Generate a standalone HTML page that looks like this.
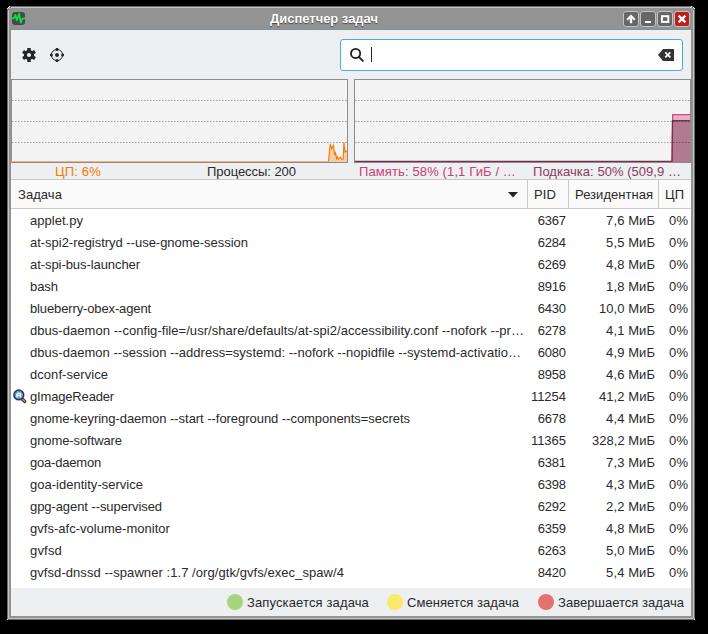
<!DOCTYPE html><html><head><meta charset="utf-8">
<style>
*{margin:0;padding:0;box-sizing:border-box}
html,body{width:708px;height:634px;background:#000;overflow:hidden;font-family:"Liberation Sans",sans-serif;font-size:13px;color:#2a2a2a}
.abs{position:absolute}
#frame{position:absolute;left:7px;top:6px;width:688px;height:614px;background:#939393;border:1px solid #6a6a6a;border-radius:4px 4px 0 0}
#frame .hl{position:absolute;left:0;top:0;right:0;bottom:0;border:1px solid #c6c6c6;border-radius:3px 3px 0 0}
#title{position:absolute;left:270px;top:8px;height:21px;white-space:nowrap;color:#fff;font-weight:bold;font-size:13px;line-height:21px;text-shadow:0 1px 1px #444}
#blue{position:absolute;left:11px;top:29px;width:680px;height:1px;background:#7895a6}
#content{position:absolute;left:11px;top:30px;width:680px;height:586px;background:#eeeff1;overflow:hidden}
.tb{position:absolute;top:11px;width:16px;height:16px;background:#666;border:1px solid #c3c3c3;border-radius:3px}
.tb.close{background:#bf1b1b}
#search{position:absolute;left:329px;top:9px;width:343px;height:32px;background:#fff;border:1px solid #4aa9e6;border-radius:3px}
.graph{position:absolute;top:49px;height:84px;background:#f4f4f4;border:1px solid #8c8c8c}
.lbl{position:absolute;top:134px;height:16px;line-height:16px;white-space:nowrap}
#header{position:absolute;left:0;top:149px;width:680px;height:30px;background:#fafafa;border-top:1px solid #c9c9c9;border-bottom:1px solid #c9c9c9}
.hc{position:absolute;top:1px;height:28px;line-height:28px;white-space:nowrap}
.vd{position:absolute;top:0;width:1px;height:28px;background:#c9c9c9}
#list{position:absolute;left:0;top:179px;width:680px;height:379px;background:#fff;overflow:hidden}
.row{position:absolute;left:0;width:680px;height:22px;line-height:22px;white-space:nowrap}
.row span{position:absolute;top:1px}
.n{left:19px}
.p{right:125px;text-align:right}
.r{right:36px;text-align:right}
.c{right:3px;text-align:right}
#status{position:absolute;left:0;top:558px;width:680px;height:28px}
.dot{position:absolute;top:15px;width:16px;height:16px;border-radius:50%}
.st{position:absolute;top:565px;line-height:16px;white-space:nowrap}
</style></head><body>
<div id="frame"><div class="hl"></div></div><div class="abs" style="left:7px;top:619px;width:1px;height:1px;background:#e0e0e0"></div><div class="abs" style="left:694px;top:619px;width:1px;height:1px;background:#e0e0e0"></div><div class="abs" style="left:9px;top:6px;width:1px;height:1px;background:#f0f0f0"></div><div class="abs" style="left:8px;top:7px;width:1px;height:1px;background:#f0f0f0"></div><div class="abs" style="left:7px;top:8px;width:1px;height:1px;background:#e8e8e8"></div><div class="abs" style="left:10px;top:7px;width:1px;height:1px;background:#6e6e6e"></div><div class="abs" style="left:8px;top:9px;width:1px;height:1px;background:#6e6e6e"></div><div class="abs" style="left:9px;top:7px;width:1px;height:1px;background:#a0a0a0"></div><div class="abs" style="left:8px;top:8px;width:1px;height:1px;background:#a0a0a0"></div><div class="abs" style="left:691px;top:6px;width:1px;height:1px;background:#f0f0f0"></div><div class="abs" style="left:693px;top:7px;width:1px;height:1px;background:#f0f0f0"></div><div class="abs" style="left:694px;top:8px;width:1px;height:1px;background:#e8e8e8"></div><div class="abs" style="left:692px;top:7px;width:1px;height:1px;background:#6e6e6e"></div><div class="abs" style="left:693px;top:9px;width:1px;height:1px;background:#6e6e6e"></div><div class="abs" style="left:692px;top:8px;width:1px;height:1px;background:#a0a0a0"></div>
<!-- app icon -->
<svg class="abs" style="left:12px;top:12px" width="13" height="13" viewBox="0 0 13 13">
<rect x="0" y="0" width="13" height="13" rx="3" fill="#484848"></rect>
<polyline points="0,6.4 2,6.2 3.4,3 4.8,8.3 7.1,1.6 8.8,10.6 10.5,6.5 13,6.4" fill="none" stroke="#00e840" stroke-width="1.7" stroke-linejoin="round"></polyline>
</svg>
<div id="title" style="letter-spacing: -0.022px;">Диспетчер задач</div>
<div class="tb" style="left:623px"></div>
<div class="tb" style="left:640px"></div>
<div class="tb" style="left:657px"></div>
<div class="tb close" style="left:674px"></div>
<svg class="abs" style="left:623px;top:11px" width="68" height="16" viewBox="0 0 68 16">
<path fill="#fff" d="M8 3.6 L12.5 8.1 L11.1 9.4 L9.2 7.6 V12.2 H6.8 V7.6 L4.9 9.4 L3.5 8.1 Z"></path>
<rect x="21.9" y="10" width="6.1" height="2" fill="#fff"></rect>
<rect x="38.9" y="5.2" width="6.4" height="5.7" fill="none" stroke="#fff" stroke-width="2"></rect>
<path d="M55.6 4.6 L62.4 11.4 M62.4 4.6 L55.6 11.4" stroke="#fff" stroke-width="2.4"></path>
</svg>
<div id="blue"></div>
<div id="content">
  <!-- toolbar icons -->
  <svg class="abs" style="left:11px;top:18px" width="14" height="14" viewBox="0 0 14 14">
    <g transform="translate(7 7)" fill="#262626">
      <circle r="5.1"></circle>
      <rect x="-1.8" y="-7" width="3.6" height="14" rx="0.6"></rect>
      <rect x="-1.8" y="-7" width="3.6" height="14" rx="0.6" transform="rotate(60)"></rect>
      <rect x="-1.8" y="-7" width="3.6" height="14" rx="0.6" transform="rotate(120)"></rect>
      <circle r="2.1" fill="#eeeff1"></circle>
    </g>
  </svg>
  <svg class="abs" style="left:39px;top:18px" width="14" height="14" viewBox="0 0 14 14">
    <circle cx="7" cy="7" r="5.6" fill="none" stroke="#262626" stroke-width="1"></circle>
    <circle cx="7" cy="7" r="2" fill="#262626"></circle>
    <circle cx="7" cy="1.4" r="1.5" fill="#262626"></circle>
    <circle cx="7" cy="12.6" r="1.5" fill="#262626"></circle>
    <circle cx="1.4" cy="7" r="1.5" fill="#262626"></circle>
    <circle cx="12.6" cy="7" r="1.5" fill="#262626"></circle>
  </svg>
  <div id="search"></div>
  <svg class="abs" style="left:338px;top:17px" width="16" height="16" viewBox="0 0 16 16">
    <circle cx="6.6" cy="6.4" r="4.6" fill="none" stroke="#1e1e1e" stroke-width="1.8"></circle>
    <path d="M9.8 9.8 L13.8 13.8" stroke="#1e1e1e" stroke-width="1.9" stroke-linecap="round"></path>
  </svg>
  <div class="abs" style="left:360px;top:17px;width:1px;height:15px;background:#222"></div>
  <svg class="abs" style="left:646px;top:18px" width="17" height="14" viewBox="0 0 17 14">
    <path fill="#333" d="M1 7 L6 1 H17 V13 H6 Z"></path>
    <path d="M8.3 4.3 L13.3 9.3 M13.3 4.3 L8.3 9.3" stroke="#fff" stroke-width="1.8"></path>
  </svg>
  <!-- graphs -->
  <div class="graph" style="left:0;width:337px"></div>
  <div class="graph" style="left:343px;width:337px"></div>
  <svg class="abs" style="left:0;top:49px" width="680" height="84" viewBox="0 0 680 84">
    <!-- cpu -->
    <path d="M0 82.5 L317 82.5 L319.2 65.2 L320.6 69.7 L322.5 66.2 L323.7 76.3 L324.6 74 L325.6 79.7 L326.3 77.8 L327.2 80.1 L329.4 78.2 L330.8 80.4 L332.2 80.1 L332.9 63.6 L334.1 73 L335.5 72 L336 72 L336 83 L1 83 Z" fill="#f8cba6"></path>
    <rect x="0" y="82" width="318" height="1" fill="#f8b07c"></rect>
    <path d="M317.5 82.5 L319.2 65.2 L320.6 69.7 L322.5 66.2 L323.7 76.3 L324.6 74 L325.6 79.7 L326.3 77.8 L327.2 80.1 L329.4 78.2 L330.8 80.4 L332.2 80.1 L332.9 63.6 L334.1 73 L335.5 72 L336 72" fill="none" stroke="#f57900" stroke-width="1.1"></path>
    <!-- mem -->
    <path d="M661 83 L661.5 35.5 L679 35.5 L679 83 Z" fill="#e2b4c7"></path>
    <path d="M661 83 L661.5 41.5 L679 41.5 L679 83 Z" fill="#b07a8f"></path>
    <path d="M661.2 83 L661.7 35.6 L679 35.6" fill="none" stroke="#cd4d85" stroke-width="1.3"></path>
    <path d="M344 82.3 L661 82.3 L661.5 41.6 L679 41.6" fill="none" stroke="#7a2c52" stroke-width="1.3"></path>
    <g stroke="#000" stroke-opacity="0.36" stroke-width="1" stroke-dasharray="1.5 1.5">
      <line x1="1" y1="21.5" x2="336" y2="21.5"></line>
      <line x1="1" y1="42.5" x2="336" y2="42.5"></line>
      <line x1="1" y1="63.5" x2="336" y2="63.5"></line>
      <line x1="344" y1="21.5" x2="679" y2="21.5"></line>
      <line x1="344" y1="42.5" x2="679" y2="42.5"></line>
      <line x1="344" y1="63.5" x2="679" y2="63.5"></line>
    </g>
    <line x1="0" y1="83.5" x2="337" y2="83.5" stroke="#8c8c8c"></line>
  </svg>
  <div class="lbl" style="left: 44px; color: rgb(245, 121, 0); letter-spacing: 0.169px;">ЦП: 6%</div>
  <div class="lbl" style="left: 196px; letter-spacing: -0.046px;">Процессы: 200</div>
  <div class="lbl" style="left: 348px; color: rgb(198, 64, 122); letter-spacing: 0.121px;">Память: 58% (1,1 ГиБ / …</div>
  <div class="lbl" style="left: 522px; color: rgb(140, 58, 98); letter-spacing: 0.04px;">Подкачка: 50% (509,9 …</div>
  <!-- header -->
  <div id="header">
    <div class="hc" style="left: 7px; letter-spacing: 0.062px;">Задача</div>
    <svg class="abs" style="left:497px;top:12px" width="10" height="6" viewBox="0 0 10 6"><path d="M0 0 H10 L5 5.5 Z" fill="#222"></path></svg>
    <div class="vd" style="left:516px"></div>
    <div class="hc" style="left: 523px; letter-spacing: 0.109px;">PID</div>
    <div class="vd" style="left:557px"></div>
    <div class="hc" style="left: 564px; letter-spacing: 0.03px;">Резидентная</div>
    <div class="vd" style="left:647px"></div>
    <div class="hc" style="left: 654px; letter-spacing: 0.016px;">ЦП</div>
  </div>
  <div id="list">
    <div class="row" style="top:0"><span class="n" style="letter-spacing: 0.026px;">applet.py</span><span class="p" style="letter-spacing: -0.23px; margin-right: 0.23px;">6367</span><span class="r" style="letter-spacing: 0.098px; margin-right: -0.098px;">7,6 МиБ</span><span class="c" style="letter-spacing: 0.102px; margin-right: -0.102px;">0%</span></div>
    <div class="row" style="top:22px"><span class="n" style="letter-spacing: -0.025px;">at-spi2-registryd --use-gnome-session</span><span class="p" style="letter-spacing: -0.23px; margin-right: 0.23px;">6284</span><span class="r" style="letter-spacing: 0.098px; margin-right: -0.098px;">5,5 МиБ</span><span class="c" style="letter-spacing: 0.102px; margin-right: -0.102px;">0%</span></div>
    <div class="row" style="top:44px"><span class="n" style="letter-spacing: -0.067px;">at-spi-bus-launcher</span><span class="p" style="letter-spacing: -0.23px; margin-right: 0.23px;">6269</span><span class="r" style="letter-spacing: 0.098px; margin-right: -0.098px;">4,8 МиБ</span><span class="c" style="letter-spacing: 0.102px; margin-right: -0.102px;">0%</span></div>
    <div class="row" style="top:66px"><span class="n" style="letter-spacing: -0.051px;">bash</span><span class="p" style="letter-spacing: -0.23px; margin-right: 0.23px;">8916</span><span class="r" style="letter-spacing: 0.098px; margin-right: -0.098px;">1,8 МиБ</span><span class="c" style="letter-spacing: 0.102px; margin-right: -0.102px;">0%</span></div>
    <div class="row" style="top:88px"><span class="n" style="letter-spacing: -0.129px;">blueberry-obex-agent</span><span class="p" style="letter-spacing: -0.23px; margin-right: 0.23px;">6430</span><span class="r" style="letter-spacing: 0.057px; margin-right: -0.057px;">10,0 МиБ</span><span class="c" style="letter-spacing: 0.102px; margin-right: -0.102px;">0%</span></div>
    <div class="row" style="top:110px"><span class="n" style="letter-spacing: 0.046px;">dbus-daemon --config-file=/usr/share/defaults/at-spi2/accessibility.conf --nofork --pr…</span><span class="p" style="letter-spacing: -0.23px; margin-right: 0.23px;">6278</span><span class="r" style="letter-spacing: 0.098px; margin-right: -0.098px;">4,1 МиБ</span><span class="c" style="letter-spacing: 0.102px; margin-right: -0.102px;">0%</span></div>
    <div class="row" style="top:132px"><span class="n" style="letter-spacing: 0.027px;">dbus-daemon --session --address=systemd: --nofork --nopidfile --systemd-activatio…</span><span class="p" style="letter-spacing: -0.23px; margin-right: 0.23px;">6080</span><span class="r" style="letter-spacing: 0.098px; margin-right: -0.098px;">4,9 МиБ</span><span class="c" style="letter-spacing: 0.102px; margin-right: -0.102px;">0%</span></div>
    <div class="row" style="top:154px"><span class="n" style="letter-spacing: 0.053px;">dconf-service</span><span class="p" style="letter-spacing: -0.23px; margin-right: 0.23px;">8958</span><span class="r" style="letter-spacing: 0.098px; margin-right: -0.098px;">4,6 МиБ</span><span class="c" style="letter-spacing: 0.102px; margin-right: -0.102px;">0%</span></div>
    <div class="row" style="top:176px"><span class="n" style="letter-spacing: -0.167px;">gImageReader</span><span class="p" style="letter-spacing: -0.037px; margin-right: 0.037px;">11254</span><span class="r" style="letter-spacing: 0.057px; margin-right: -0.057px;">41,2 МиБ</span><span class="c" style="letter-spacing: 0.102px; margin-right: -0.102px;">0%</span></div>
    <div class="row" style="top:198px"><span class="n" style="letter-spacing: -0.042px;">gnome-keyring-daemon --start --foreground --components=secrets</span><span class="p" style="letter-spacing: -0.23px; margin-right: 0.23px;">6678</span><span class="r" style="letter-spacing: 0.098px; margin-right: -0.098px;">4,4 МиБ</span><span class="c" style="letter-spacing: 0.102px; margin-right: -0.102px;">0%</span></div>
    <div class="row" style="top:220px"><span class="n" style="letter-spacing: -0.087px;">gnome-software</span><span class="p" style="letter-spacing: -0.037px; margin-right: 0.037px;">11365</span><span class="r" style="letter-spacing: 0.026px; margin-right: -0.026px;">328,2 МиБ</span><span class="c" style="letter-spacing: 0.102px; margin-right: -0.102px;">0%</span></div>
    <div class="row" style="top:242px"><span class="n" style="letter-spacing: -0.2px;">goa-daemon</span><span class="p" style="letter-spacing: -0.23px; margin-right: 0.23px;">6381</span><span class="r" style="letter-spacing: 0.098px; margin-right: -0.098px;">7,3 МиБ</span><span class="c" style="letter-spacing: 0.102px; margin-right: -0.102px;">0%</span></div>
    <div class="row" style="top:264px"><span class="n" style="letter-spacing: 0.014px;">goa-identity-service</span><span class="p" style="letter-spacing: -0.23px; margin-right: 0.23px;">6398</span><span class="r" style="letter-spacing: 0.098px; margin-right: -0.098px;">4,3 МиБ</span><span class="c" style="letter-spacing: 0.102px; margin-right: -0.102px;">0%</span></div>
    <div class="row" style="top:286px"><span class="n" style="letter-spacing: -0.077px;">gpg-agent --supervised</span><span class="p" style="letter-spacing: -0.23px; margin-right: 0.23px;">6292</span><span class="r" style="letter-spacing: 0.098px; margin-right: -0.098px;">2,2 МиБ</span><span class="c" style="letter-spacing: 0.102px; margin-right: -0.102px;">0%</span></div>
    <div class="row" style="top:308px"><span class="n" style="letter-spacing: 0.024px;">gvfs-afc-volume-monitor</span><span class="p" style="letter-spacing: -0.23px; margin-right: 0.23px;">6359</span><span class="r" style="letter-spacing: 0.098px; margin-right: -0.098px;">4,8 МиБ</span><span class="c" style="letter-spacing: 0.102px; margin-right: -0.102px;">0%</span></div>
    <div class="row" style="top:330px"><span class="n" style="letter-spacing: 0.184px;">gvfsd</span><span class="p" style="letter-spacing: -0.23px; margin-right: 0.23px;">6263</span><span class="r" style="letter-spacing: 0.098px; margin-right: -0.098px;">5,0 МиБ</span><span class="c" style="letter-spacing: 0.102px; margin-right: -0.102px;">0%</span></div>
    <div class="row" style="top:352px"><span class="n" style="letter-spacing: 0.063px;">gvfsd-dnssd --spawner :1.7 /org/gtk/gvfs/exec_spaw/4</span><span class="p" style="letter-spacing: -0.23px; margin-right: 0.23px;">8420</span><span class="r" style="letter-spacing: 0.098px; margin-right: -0.098px;">5,4 МиБ</span><span class="c" style="letter-spacing: 0.102px; margin-right: -0.102px;">0%</span></div>
    <svg class="abs" style="left:1px;top:180px" width="16" height="16" viewBox="0 0 16 16">
      <path d="M9.6 9.4 L12.8 12.4" stroke="#3a3a3a" stroke-width="3.4" stroke-linecap="round"></path>
      <path d="M9.9 9.7 L12.6 12.2" stroke="#c99a3c" stroke-width="1.3" stroke-linecap="round"></path>
      <circle cx="6.8" cy="5.9" r="4.9" fill="#4d9ff0" stroke="#3a3a3a" stroke-width="1.5"></circle>
      <path d="M5 8.4 V5.3 Q6.8 3.3 8.6 5.3 V8.4 M5 6.6 H8.6" stroke="#fff" stroke-width="1.4" fill="none"></path>
    </svg>
  </div>
  <!-- status -->
  <div class="dot" style="left:216px;top:564px;background:#a7d37d"></div>
  <div class="st" style="left: 236px; letter-spacing: 0.129px;">Запускается задача</div>
  <div class="dot" style="left:376px;top:564px;background:#fbe96b"></div>
  <div class="st" style="left: 396px; letter-spacing: 0.046px;">Сменяется задача</div>
  <div class="dot" style="left:527px;top:564px;background:#e47070"></div>
  <div class="st" style="left: 547px; letter-spacing: 0.03px;">Завершается задача</div>
</div>

</body></html>
